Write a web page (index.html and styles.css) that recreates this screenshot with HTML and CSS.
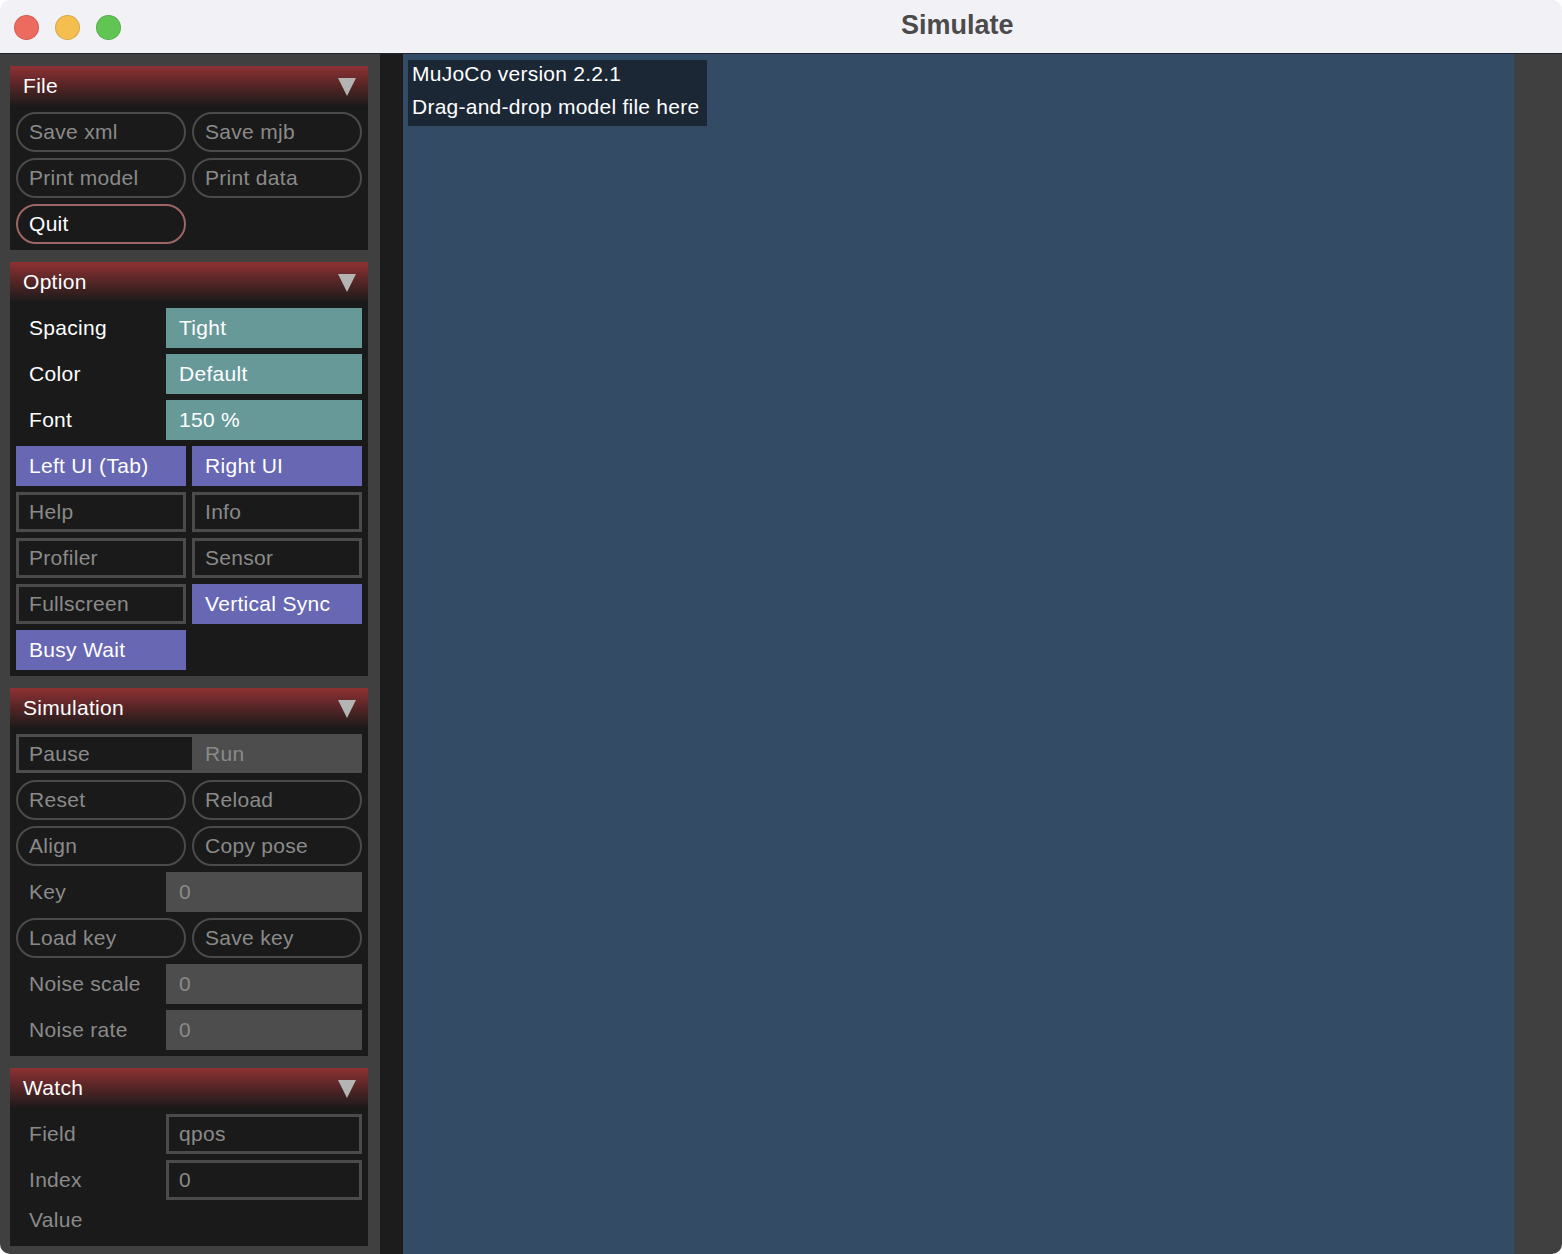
FILE: index.html
```html
<!DOCTYPE html>
<html>
<head>
<meta charset="utf-8">
<title>Simulate</title>
<link rel="stylesheet" href="styles.css">
</head>
<body>
<div class="window">
  <div class="titlebar">
    <span class="light red"></span>
    <span class="light yellow"></span>
    <span class="light green"></span>
    <span class="title">Simulate</span>
  </div>
  <div class="main">
    <div class="leftpanel">
      <div class="section">
        <div class="header"><span>File</span><span class="tri"></span></div>
        <div class="body grid2">
          <div class="pill dis">Save xml</div>
          <div class="pill dis">Save mjb</div>
          <div class="pill dis">Print model</div>
          <div class="pill dis">Print data</div>
          <div class="pill quit">Quit</div>
        </div>
      </div>

      <div class="section">
        <div class="header"><span>Option</span><span class="tri"></span></div>
        <div class="body grid2">
          <div class="row"><div class="label">Spacing</div><div class="val teal">Tight</div></div>
          <div class="row"><div class="label">Color</div><div class="val teal">Default</div></div>
          <div class="row"><div class="label">Font</div><div class="val teal">150 %</div></div>
          <div class="btn on">Left UI (Tab)</div>
          <div class="btn on">Right UI</div>
          <div class="btn off">Help</div>
          <div class="btn off">Info</div>
          <div class="btn off">Profiler</div>
          <div class="btn off">Sensor</div>
          <div class="btn off">Fullscreen</div>
          <div class="btn on">Vertical Sync</div>
          <div class="btn on">Busy Wait</div>
        </div>
      </div>

      <div class="section">
        <div class="header"><span>Simulation</span><span class="tri"></span></div>
        <div class="body grid2">
          <div class="radio">
            <div class="opt sel">Pause</div>
            <div class="opt">Run</div>
          </div>
          <div class="pill dis">Reset</div>
          <div class="pill dis">Reload</div>
          <div class="pill dis">Align</div>
          <div class="pill dis">Copy pose</div>
          <div class="row"><div class="label dim">Key</div><div class="val grayval">0</div></div>
          <div class="pill dis">Load key</div>
          <div class="pill dis">Save key</div>
          <div class="row"><div class="label dim">Noise scale</div><div class="val grayval">0</div></div>
          <div class="row"><div class="label dim">Noise rate</div><div class="val grayval">0</div></div>
        </div>
      </div>

      <div class="section">
        <div class="header"><span>Watch</span><span class="tri"></span></div>
        <div class="body grid2 watch">
          <div class="row"><div class="label dim">Field</div><div class="val edit">qpos</div></div>
          <div class="row"><div class="label dim">Index</div><div class="val edit">0</div></div>
          <div class="row short"><div class="label dim">Value</div></div>
        </div>
      </div>
    </div>
    <div class="scroll"></div>
    <div class="viewport">
      <div class="info">
        <div class="line">MuJoCo version 2.2.1</div>
        <div class="line">Drag-and-drop model file here</div>
      </div>
    </div>
    <div class="rightstrip"></div>
  </div>
</div>
</body>
</html>
```

FILE: styles.css
```css
html, body {
  margin: 0;
  padding: 0;
  background: #ffffff;
}

.window {
  width: 1562px;
  height: 1254px;
  display: flex;
  flex-direction: column;
  border-radius: 10px;
  overflow: hidden;
  font-family: "Liberation Sans", Arial, sans-serif;
}

.titlebar {
  height: 53px;
  flex: 0 0 53px;
  background: #f2f1f6;
  border-bottom: 1px solid #1f2630;
  display: flex;
  align-items: center;
  padding-left: 14px;
  box-sizing: content-box;
}

.light {
  width: 23px;
  height: 23px;
  border-radius: 50%;
  margin-right: 16px;
  margin-top: 2px;
  border: 0.5px solid rgba(0, 0, 0, 0.12);
}
.light.red { background: #ed6a5e; }
.light.yellow { background: #f5bf4f; }
.light.green { background: #61c554; }

.title {
  margin-left: 764px;
  font-size: 27px;
  font-weight: bold;
  color: #4b4b4b;
  margin-top: -2px;
}

.main {
  flex: 1;
  display: flex;
  min-height: 0;
}

.leftpanel {
  width: 358px;
  flex: 0 0 358px;
  background: #404040;
  padding: 12px 12px 0 10px;
  display: flex;
  flex-direction: column;
  gap: 12px;
}

.section {
  background: #1a1a1a;
}

.header {
  height: 40px;
  background: linear-gradient(#8f3133 0%, #5a2627 45%, #1c1a1a 100%);
  display: flex;
  align-items: center;
  justify-content: space-between;
  padding: 0 12px 0 13px;
  color: #ffffff;
  font-size: 21px;
  letter-spacing: 0.3px;
}

.tri {
  width: 0;
  height: 0;
  border-left: 9px solid transparent;
  border-right: 9px solid transparent;
  border-top: 18px solid #b4b4b4;
  margin-top: 1px;
}

.body {
  padding: 6px;
}

.grid2 {
  display: grid;
  grid-template-columns: 170px 170px;
  grid-auto-rows: 40px;
  gap: 6px;
}
.grid2.watch {
  grid-template-rows: 40px 40px 34px;
}

.pill, .btn, .label, .val, .opt {
  font-size: 21px;
  letter-spacing: 0.3px;
  display: flex;
  align-items: center;
  box-sizing: border-box;
  white-space: nowrap;
}

.pill {
  border: 2px solid #4b4b4b;
  border-radius: 20px;
  padding-left: 11px;
  color: #8a8a8a;
}
.pill.quit {
  border-color: #9d6565;
  color: #ffffff;
}

.btn {
  padding-left: 13px;
  color: #ffffff;
}
.btn.on {
  background: #6767b3;
}
.btn.off {
  border: 3px solid #4b4b4b;
  padding-left: 10px;
  color: #8a8a8a;
}

.row {
  grid-column: 1 / 3;
  display: grid;
  grid-template-columns: 150px 196px;
}
.row.short {
  align-items: start;
}
.row.short .label {
  height: 28px;
}

.label {
  padding-left: 13px;
  color: #ffffff;
}
.label.dim {
  color: #8a8a8a;
}

.val {
  padding-left: 13px;
  color: #ffffff;
}
.val.teal {
  background: #679999;
}
.val.grayval {
  background: #4d4d4d;
  color: #8a8a8a;
}
.val.edit {
  border: 3px solid #4b4b4b;
  padding-left: 10px;
  color: #8a8a8a;
}

.radio {
  grid-column: 1 / 3;
  background: #4d4d4d;
  padding: 3px;
  display: flex;
  box-sizing: border-box;
  height: 39px;
}
.opt {
  color: #8a8a8a;
  flex: 1;
  padding-left: 13px;
}
.opt.sel {
  flex: 0 0 173px;
  background: #1a1a1a;
  padding-left: 10px;
}

.scroll {
  width: 23px;
  flex: 0 0 23px;
  background: #1c1c1c;
}

.viewport {
  flex: 1;
  background: #334b65;
  padding: 6px 0 0 5px;
  display: flex;
  align-items: flex-start;
}

.info {
  background: #1b2735;
  padding: 0 8px 0 4px;
  color: #ffffff;
  font-size: 21px;
  letter-spacing: 0.25px;
}
.info .line {
  height: 33px;
  line-height: 28px;
  white-space: nowrap;
}

.rightstrip {
  width: 48px;
  flex: 0 0 48px;
  background: #404040;
}
```
